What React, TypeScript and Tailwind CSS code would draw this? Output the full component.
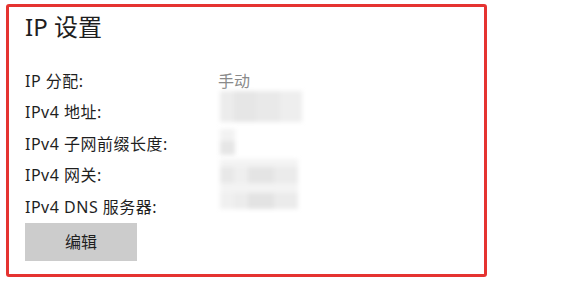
import React from "react";

const rows = [
  { label: "IP 分配:", value: "手动" },
  { label: "IPv4 地址:" },
  { label: "IPv4 子网前缀长度:" },
  { label: "IPv4 网关:" },
  { label: "IPv4 DNS 服务器:" },
];

export default function App() {
  return (
    <div
      className="w-[587px] h-[300px] bg-white text-[#1f1f1f]"
      style={{ fontFamily: '"Noto Sans", "Noto Sans CJK SC", sans-serif' }}
    >
      <div className="pt-[4px] pl-[6px]">
        <div className="w-[481px] h-[273px] border-[3px] border-[#e53331] rounded-[3px] pl-[16px] pt-[4px]">
          <h1 className="text-[24px] leading-[32px] font-normal">IP 设置</h1>

          <div className="relative mt-[22px]">
            {rows.map((r) => (
              <div key={r.label} className="flex h-[31.5px] items-center text-[16px]">
                <span className="w-[193px] shrink-0 tracking-[0.5px]">{r.label}</span>
                {r.value ? <span className="text-[#8a8a8a]">{r.value}</span> : null}
              </div>
            ))}

            {/* blurred values */}
            <div className="absolute left-[195px] top-[26px] w-[82px] h-[31px] blur-[2px] flex">
              <div className="w-[14px] bg-[#ececec]" />
              <div className="w-[22px] bg-[#e6e6e6]" />
              <div className="w-[24px] bg-[#e9e9e9]" />
              <div className="w-[22px] bg-[#eeeeee]" />
            </div>
            <div className="absolute left-[195px] top-[64px] w-[15px] h-[28px] blur-[2px] flex flex-col">
              <div className="h-[12px] bg-[#f2f2f2]" />
              <div className="h-[14px] bg-[#e6e6e6]" />
            </div>
            <div className="absolute left-[195px] top-[94px] w-[78px] h-[56px] blur-[2px] flex flex-col">
              <div className="h-[8px] bg-[#f3f3f3]" />
              <div className="h-[16px] flex">
                <div className="w-[14px] bg-[#e8e8e8]" />
                <div className="w-[14px] bg-[#efefef]" />
                <div className="w-[26px] bg-[#e4e4e4]" />
                <div className="w-[24px] bg-[#ebebeb]" />
              </div>
              <div className="h-[10px] bg-[#f3f3f3]" />
              <div className="h-[16px] flex">
                <div className="w-[14px] bg-[#f0f0f0]" />
                <div className="w-[14px] bg-[#ececec]" />
                <div className="w-[26px] bg-[#e3e3e3]" />
                <div className="w-[24px] bg-[#ebebeb]" />
              </div>
            </div>
          </div>

          <button className="mt-0 w-[112px] h-[38px] bg-[#cccccc] text-[16px] text-[#1f1f1f]">
            编辑
          </button>
        </div>
      </div>
    </div>
  );
}
